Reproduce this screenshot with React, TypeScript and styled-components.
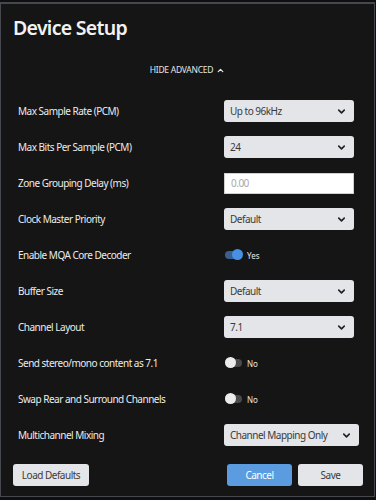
import React from 'react';
import styled, { createGlobalStyle } from 'styled-components';
import { ChevronDown, ChevronUp } from 'lucide-react';

const Global = createGlobalStyle`
    html, body {
        margin: 0;
        padding: 0;
        background: #0f0f0f;
        font-family: 'Noto Sans', 'Open Sans', sans-serif;
    }
`;

const Dialog = styled.div`
    box-sizing: border-box;
    margin-top: 2px;
    width: 375px;
    height: 495px;
    background: #151515;
    border: 1px solid #45484d;
    border-top-width: 2px;
    display: flex;
    flex-direction: column;
`;

const Title = styled.h1`
    margin: 12px 0 0 12px;
    font-size: 19.5px;
    line-height: 24px;
    font-weight: 600;
    letter-spacing: -0.7px;
    color: #f2f2f2;
`;

const Advanced = styled.div`
    margin-top: 24px;
    height: 12px;
    display: flex;
    align-items: center;
    justify-content: center;
    gap: 3px;
    font-size: 8.5px;
    line-height: 12px;
    letter-spacing: -0.25px;
    color: #e6e6e6;
    text-transform: uppercase;
`;

const Rows = styled.div`
    margin-top: 17px;
    padding-left: 17px;
    display: flex;
    flex-direction: column;
`;

const Row = styled.div`
    height: 36px;
    display: grid;
    grid-template-columns: 206px auto;
    align-items: center;
`;

const Label = styled.span`
    font-size: 10px;
    letter-spacing: -0.5px;
    color: #ececec;
`;

const Select = styled.div<{ $wide?: boolean }>`
    box-sizing: border-box;
    width: ${(p) => (p.$wide ? '135px' : '130px')};
    height: 22px;
    padding: 0 7px 0 6px;
    background: #e3e5e9;
    border-radius: 3px;
    display: flex;
    align-items: center;
    justify-content: space-between;
    white-space: nowrap;
    font-size: 10px;
    letter-spacing: -0.5px;
    color: #3a3a3a;
`;

const Input = styled.div`
    box-sizing: border-box;
    width: 130px;
    height: 21px;
    padding: 0 6px;
    background: #ffffff;
    border: 1px solid #d0d0d0;
    display: flex;
    align-items: center;
    font-size: 10px;
    letter-spacing: -0.5px;
    color: #a8a8a8;
`;

const Switch = styled.div`
    display: flex;
    align-items: center;
    gap: 5px;
    font-size: 8px;
    color: #e8e8e8;
    padding-left: 1px;
`;

const Track = styled.span<{ $on: boolean }>`
    position: relative;
    width: 17px;
    height: 8px;
    border-radius: 4px;
    background: ${(p) => (p.$on ? '#3b5f8c' : '#4a4a4a')};
`;

const Knob = styled.span<{ $on: boolean }>`
    position: absolute;
    top: -2px;
    left: ${(p) => (p.$on ? '7px' : '0px')};
    width: 11px;
    height: 11px;
    border-radius: 50%;
    background: ${(p) => (p.$on ? '#4a90e2' : '#ececec')};
`;

const Footer = styled.div`
    margin-top: 11px;
    padding: 0 11px 0 12px;
    display: flex;
    align-items: center;
    gap: 6px;
`;

const Button = styled.button<{ $primary?: boolean; $w: number }>`
    width: ${(p) => p.$w}px;
    height: 22px;
    padding: 0;
    border: none;
    border-radius: 3px;
    background: ${(p) => (p.$primary ? '#5b9be0' : '#e3e5e9')};
    color: ${(p) => (p.$primary ? '#ffffff' : '#3a3a3a')};
    font-family: 'Noto Sans', 'Open Sans', sans-serif;
    font-size: 10px;
    letter-spacing: -0.5px;
`;

const Spacer = styled.div`
    flex: 1;
`;

type Field =
    | { label: string; kind: 'select'; value: string; wide?: boolean }
    | { label: string; kind: 'input'; value: string }
    | { label: string; kind: 'switch'; on: boolean };

const fields: Field[] = [
    { label: 'Max Sample Rate (PCM)', kind: 'select', value: 'Up to 96kHz' },
    { label: 'Max Bits Per Sample (PCM)', kind: 'select', value: '24' },
    { label: 'Zone Grouping Delay (ms)', kind: 'input', value: '0.00' },
    { label: 'Clock Master Priority', kind: 'select', value: 'Default' },
    { label: 'Enable MQA Core Decoder', kind: 'switch', on: true },
    { label: 'Buffer Size', kind: 'select', value: 'Default' },
    { label: 'Channel Layout', kind: 'select', value: '7.1' },
    { label: 'Send stereo/mono content as 7.1', kind: 'switch', on: false },
    { label: 'Swap Rear and Surround Channels', kind: 'switch', on: false },
    { label: 'Multichannel Mixing', kind: 'select', value: 'Channel Mapping Only', wide: true },
];

const Control = ({ f }: { f: Field }) => {
    if (f.kind === 'select')
        return (
            <Select $wide={f.wide}>
                {f.value}
                <ChevronDown size={11} strokeWidth={3.5} color="#222" />
            </Select>
        );
    if (f.kind === 'input') return <Input>{f.value}</Input>;
    return (
        <Switch>
            <Track $on={f.on}>
                <Knob $on={f.on} />
            </Track>
            {f.on ? 'Yes' : 'No'}
        </Switch>
    );
};

const App = (): React.ReactElement => {
    return (
        <>
            <Global />
            <Dialog>
                <Title>Device Setup</Title>
                <Advanced>
                    Hide Advanced
                    <ChevronUp size={9} strokeWidth={3.5} color="#e6e6e6" />
                </Advanced>
                <Rows>
                    {fields.map((f) => (
                        <Row key={f.label}>
                            <Label>{f.label}</Label>
                            <Control f={f} />
                        </Row>
                    ))}
                </Rows>
                <Footer>
                    <Button $w={76}>Load Defaults</Button>
                    <Spacer />
                    <Button $primary $w={65}>Cancel</Button>
                    <Button $w={65}>Save</Button>
                </Footer>
            </Dialog>
        </>
    );
};

export default App;
